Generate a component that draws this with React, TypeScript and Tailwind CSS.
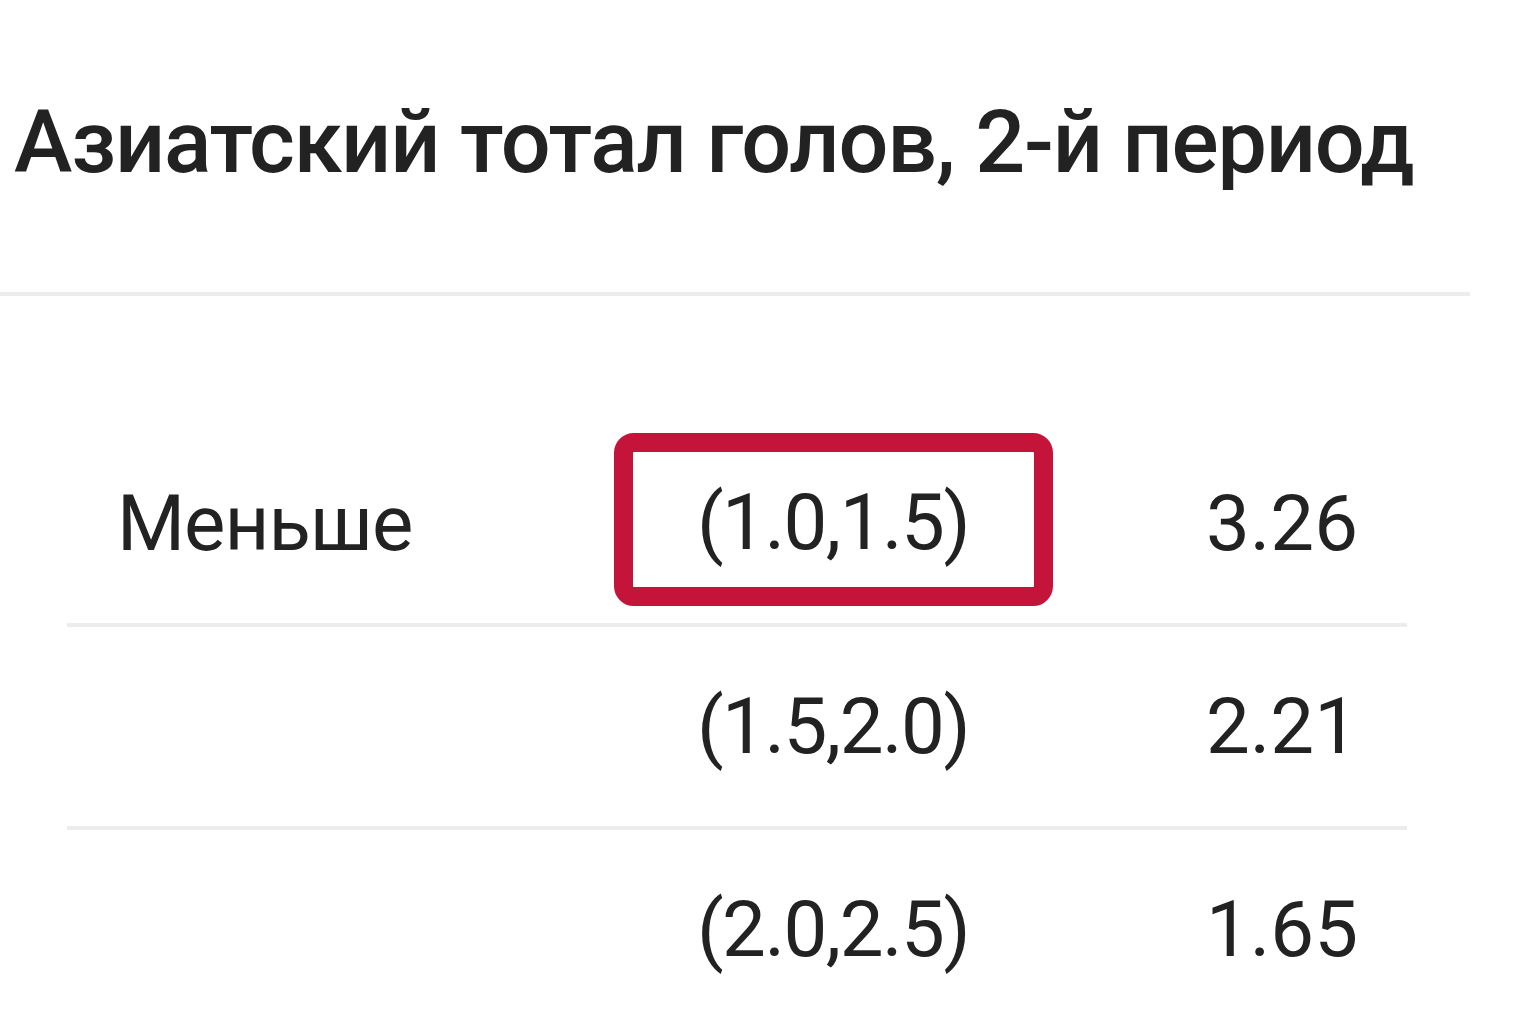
import React from 'react'

const rows = [
  { label: 'Меньше', line: '(1.0,1.5)', odds: '3.26', picked: true },
  { label: '', line: '(1.5,2.0)', odds: '2.21', picked: false },
  { label: '', line: '(2.0,2.5)', odds: '1.65', picked: false },
]

export default function App() {
  return (
    <div
      className="w-[1536px] h-[1024px] overflow-hidden bg-white text-[#222222]"
      style={{ fontFamily: 'Roboto, "Noto Sans", sans-serif' }}
    >
      <div className="w-[1470px] h-[296px] border-b-4 border-[#ececec] flex items-center pl-[14px] pb-[8px]">
        <h1 className="text-[88px] leading-none font-medium tracking-[-1.2px] whitespace-nowrap">
          Азиатский тотал голов, 2-й период
        </h1>
      </div>

      <div className="ml-[67px] w-[1340px] mt-[128px]">
        {rows.map((row, i) => (
          <div
            key={i}
            className="grid grid-cols-[442px_648px_250px] items-center h-[203px] border-b-4 border-[#ececec] text-[78px] leading-none"
          >
            <div className="pl-[50px] tracking-[-1px]">{row.label}</div>
            {row.picked ? (
              <div className="flex justify-center pb-[9px] tracking-[-1.5px]">
                <div className="w-[439px] h-[173px] rounded-[20px] border-[19px] border-[#c4143a] flex items-center justify-center pt-[8px]">
                  {row.line}
                </div>
              </div>
            ) : (
              <div className="flex justify-center tracking-[-1.5px]">{row.line}</div>
            )}
            <div className="text-center">{row.odds}</div>
          </div>
        ))}
      </div>
    </div>
  )
}
